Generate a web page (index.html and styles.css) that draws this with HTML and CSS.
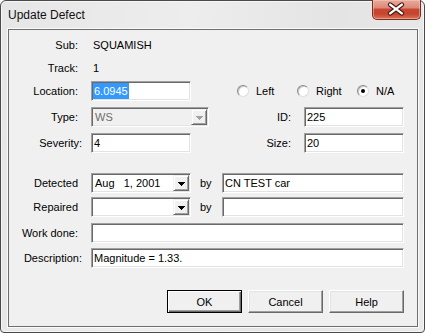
FILE: index.html
```html
<!DOCTYPE html>
<html lang="en">
<head>
    <meta charset="UTF-8">
    <meta name="viewport" content="width=device-width, initial-scale=1.0">
    <title>Update Defect</title>
    <link rel="stylesheet" href="styles.css">
</head>

<body>
    <div class="window">
        <div class="titlebar">
            <span class="title">Update Defect</span>
            <div class="close">
                <svg width="49" height="20" viewBox="0 0 49 20">
                    <path d="M18.5 5.5 L30.5 14.5 M30.5 5.5 L18.5 14.5" stroke="#4a1a12" stroke-width="4.6" stroke-linecap="round" fill="none"/>
                    <path d="M18.5 5.5 L30.5 14.5 M30.5 5.5 L18.5 14.5" stroke="#ffffff" stroke-width="2.4" stroke-linecap="round" fill="none"/>
                </svg>
            </div>
        </div>

        <div class="client">
            <div class="fields">
                <div class="row">
                    <span class="lbl">Sub:</span>
                    <span class="val">SQUAMISH</span>
                </div>
                <div class="row">
                    <span class="lbl">Track:</span>
                    <span class="val">1</span>
                </div>
                <div class="row">
                    <span class="lbl">Location:</span>
                    <div class="edit short"><span class="sel">6.0945</span></div>
                    <div class="radios">
                        <div class="radio"><span class="dot"></span>Left</div>
                        <div class="radio"><span class="dot"></span>Right</div>
                        <div class="radio on"><span class="dot"></span>N/A</div>
                    </div>
                </div>
                <div class="row">
                    <span class="lbl">Type:</span>
                    <div class="combo type disabled">
                        <span class="combo-text">WS</span>
                        <span class="arrow"><svg width="7" height="4"><path d="M0 0H7V1H6V2H5V3H4V4H3V3H2V2H1V1H0Z"/></svg></span>
                    </div>
                    <div class="side">
                        <span class="side-lbl">ID:</span>
                        <div class="edit short">225</div>
                    </div>
                </div>
                <div class="row">
                    <span class="lbl wide">Severity:</span>
                    <div class="edit short">4</div>
                    <div class="side">
                        <span class="side-lbl">Size:</span>
                        <div class="edit short">20</div>
                    </div>
                </div>
                <div class="row">
                    <span class="lbl">Detected</span>
                    <div class="combo date">
                        <span class="combo-text">Aug   1, 2001</span>
                        <span class="arrow"><svg width="7" height="4"><path d="M0 0H7V1H6V2H5V3H4V4H3V3H2V2H1V1H0Z"/></svg></span>
                    </div>
                    <span class="by">by</span>
                    <div class="edit grow">CN TEST car</div>
                </div>
                <div class="row">
                    <span class="lbl">Repaired</span>
                    <div class="combo date">
                        <span class="combo-text"></span>
                        <span class="arrow"><svg width="7" height="4"><path d="M0 0H7V1H6V2H5V3H4V4H3V3H2V2H1V1H0Z"/></svg></span>
                    </div>
                    <span class="by">by</span>
                    <div class="edit grow"></div>
                </div>
                <div class="row">
                    <span class="lbl">Work done:</span>
                    <div class="edit grow"></div>
                </div>
                <div class="row">
                    <span class="lbl wide">Description:</span>
                    <div class="edit grow">Magnitude = 1.33.</div>
                </div>
            </div>

            <div class="buttons">
                <button class="btn default">OK</button>
                <button class="btn">Cancel</button>
                <button class="btn">Help</button>
            </div>
        </div>
    </div>
</body>

</html>
```

FILE: styles.css
```css
body {
    margin: 0;
    background-color: #ffffff;
    font-family: "Liberation Sans", Arial, sans-serif;
    font-size: 11px;
    color: #000000;
}

.window {
    width: 425px;
    height: 333px;
    box-sizing: border-box;
    border: 1px solid #4a4a4a;
    border-radius: 6px 6px 4px 4px;
    background: linear-gradient(100deg, #e6e6e6 0%, #ededed 40%, #e4e4e4 70%, #e9e9e9 100%);
    box-shadow: inset 0 0 0 1px #f6f6f6;
}

.titlebar {
    height: 28px;
    display: flex;
    justify-content: space-between;
    align-items: flex-start;
}

.title {
    padding: 6px 0 0 7px;
    font-size: 12px;
    line-height: 16px;
    color: #111111;
}

.close {
    width: 49px;
    height: 20px;
    margin: -1px 3px 0 0;
    box-sizing: border-box;
    border: 1px solid #7a2e22;
    border-top: none;
    border-radius: 0 0 5px 5px;
    background: linear-gradient(#e9aa9c 0%, #dc8a7a 40%, #c9452f 50%, #c54631 75%, #dc7458 100%);
    box-shadow: inset 0 0 0 1px rgba(255, 210, 200, 0.45);
    display: flex;
}

.close svg {
    margin: -1px 0 0 -1px;
}

.client {
    width: 410px;
    height: 298px;
    margin-left: 7px;
    box-sizing: border-box;
    border: 1px solid #6e6e6e;
    background-color: #f0f0f0;
    box-shadow: 0 0 0 1px #fafafa;
    padding: 5px 13px 0 0;
}

.fields {
    display: grid;
    grid-template-columns: minmax(0, 1fr);
    grid-template-rows: 23px 23px 26px 26px 40px 24px 26px 25px 20px;
}

.row {
    height: 20px;
    display: flex;
    align-items: center;
    min-width: 0;
}

.lbl {
    flex: none;
    width: 69px;
    margin-right: 13px;
    text-align: right;
    white-space: nowrap;
}

.lbl.wide {
    width: 73px;
    margin-right: 9px;
}

.val {
    padding-left: 2px;
}

.edit,
.combo {
    box-sizing: border-box;
    height: 20px;
    background-color: #ffffff;
    border: 1px solid;
    border-color: #a0a0a0 #ffffff #ffffff #a0a0a0;
    box-shadow: inset 1px 1px 0 #696969, inset -1px -1px 0 #e3e3e3;
}

.edit {
    padding-left: 2px;
    line-height: 18px;
    white-space: nowrap;
    overflow: hidden;
}

.edit.short {
    flex: none;
    width: 100px;
}

.edit.grow {
    flex: 1;
    min-width: 0;
}

.sel {
    display: inline-block;
    margin: 1px 0 0 -1px;
    padding: 0 1px;
    height: 16px;
    line-height: 16px;
    vertical-align: top;
    background-color: #3399ff;
    color: #ffffff;
}

.combo {
    flex: none;
    display: flex;
    padding: 1px;
}

.combo.type {
    width: 118px;
}

.combo.date {
    width: 100px;
}

.combo.disabled {
    background-color: #f0f0f0;
}

.combo-text {
    flex: 1;
    padding-left: 2px;
    line-height: 16px;
    white-space: pre;
}

.combo.disabled .combo-text {
    color: #6d6d6d;
}

.arrow {
    width: 16px;
    height: 16px;
    box-sizing: border-box;
    background-color: #f0f0f0;
    border: 1px solid;
    border-color: #f0f0f0 #696969 #696969 #f0f0f0;
    box-shadow: inset 1px 1px 0 #ffffff, inset -1px -1px 0 #a0a0a0;
    display: flex;
    align-items: center;
    justify-content: center;
}

.arrow svg {
    fill: #000000;
    margin-top: 1px;
}

.combo.disabled .arrow svg {
    fill: #a0a0a0;
}

.radios {
    display: flex;
    margin-left: 46px;
}

.radio {
    width: 60px;
    display: flex;
    align-items: center;
}

.radio:last-child {
    width: auto;
}

.dot {
    width: 12px;
    height: 12px;
    margin-right: 7px;
    box-sizing: border-box;
    border-radius: 50%;
    background-color: #ffffff;
    border: 1px solid;
    border-color: #8a8a8a #dedede #dedede #8a8a8a;
    box-shadow: inset 1px 1px 0 #c8c8c8;
    display: flex;
    align-items: center;
    justify-content: center;
}

.radio.on .dot::after {
    content: "";
    width: 4px;
    height: 4px;
    border-radius: 50%;
    background-color: #000000;
}

.side {
    margin-left: auto;
    display: flex;
    align-items: center;
}

.side .edit {
    margin-left: 13px;
}

.by {
    flex: none;
    width: 31px;
    box-sizing: border-box;
    padding-left: 9px;
}

.buttons {
    margin-top: 22px;
    display: flex;
    justify-content: flex-end;
    gap: 6px;
}

.btn {
    width: 75px;
    height: 23px;
    box-sizing: border-box;
    padding: 0;
    font-family: "Liberation Sans", Arial, sans-serif;
    font-size: 11px;
    color: #000000;
    background-color: #f0f0f0;
    border: 1px solid;
    border-color: #ffffff #696969 #696969 #ffffff;
    box-shadow: inset -1px -1px 0 #a0a0a0, inset 1px 1px 0 #e3e3e3;
}

.btn.default {
    border-color: #000000;
    box-shadow: inset 1px 1px 0 #ffffff, inset -1px -1px 0 #696969, inset -2px -2px 0 #a0a0a0;
}
```
